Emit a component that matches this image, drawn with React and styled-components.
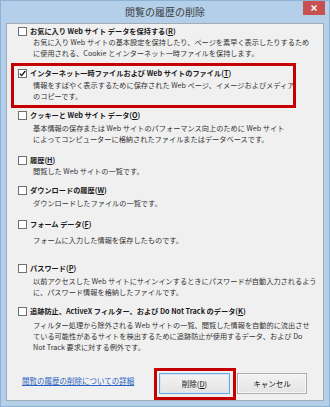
import React from 'react';
import styled, { createGlobalStyle } from 'styled-components';

const GlobalStyle = createGlobalStyle`
  html, body {
    margin: 0;
    padding: 0;
    background: #fff;
  }
  body {
    font-family: "Noto Sans CJK JP", "Liberation Sans", sans-serif;
  }
`;

const Window = styled.div`
  width: 330px;
  height: 407px;
  box-sizing: border-box;
  background: #b3cfea;
  border: 1px solid #8fb1d4;
  display: flex;
  flex-direction: column;
`;

const TitleBar = styled.div`
  height: 22px;
  display: grid;
  grid-template-columns: 1fr auto 1fr;
  align-items: start;
`;

const Title = styled.div`
  grid-column: 2;
  font-size: 10px;
  line-height: 22px;
  color: #3c3c3c;
`;

const CloseButton = styled.div`
  grid-column: 3;
  justify-self: end;
  margin-right: 4px;
  width: 22px;
  height: 14px;
  background: #c75050;
  display: flex;
  align-items: center;
  justify-content: center;
`;

const Client = styled.div`
  flex: 1;
  margin: 0 5px 5px 5px;
  background: #f0f0f0;
  border: 1px solid #a3abb5;
  padding: 1px 16px 0 11px;
  display: flex;
  flex-direction: column;
`;

const Item = styled.div`
  position: relative;
  margin-top: ${(p) => p.$top}px;

  ${(p) =>
    p.$highlight &&
    `
    &::after {
      content: '';
      position: absolute;
      left: -7px;
      top: -4px;
      width: 285px;
      height: 45px;
      box-sizing: border-box;
      border: 3px solid #c40000;
      pointer-events: none;
    }
  `}
`;

const Label = styled.label`
  display: flex;
  align-items: center;
  gap: 3px;
  height: 12px;
  font-size: 7.2px;
  font-weight: 700;
  color: #1a1a1a;
  white-space: nowrap;
`;

const Box = styled.span`
  width: 9px;
  height: 9px;
  box-sizing: border-box;
  border: 1px solid #6f6f6f;
  background: #fff;
  display: flex;
  align-items: center;
  justify-content: center;
  flex: none;
`;

const Desc = styled.div`
  margin: ${(p) => p.$gap}px 0 0 15px;
  font-size: 7.2px;
  line-height: 11px;
  color: #333;
  white-space: nowrap;
`;

const Footer = styled.div`
  margin-top: 20px;
  display: flex;
  align-items: flex-start;
  padding-left: 4px;
`;

const HelpLink = styled.a`
  margin-top: 2px;
  font-size: 7.5px;
  line-height: 12px;
  color: #2a62c0;
  text-decoration: underline;
  white-space: nowrap;
`;

const Buttons = styled.div`
  margin-left: auto;
  display: flex;
  gap: 7px;
`;

const Button = styled.button`
  position: relative;
  width: ${(p) => p.$w}px;
  height: 21px;
  padding: 0;
  font-family: inherit;
  font-size: 7.5px;
  color: #111;
  background: linear-gradient(#f3f3f3, #e4e4e4);
  border: 1px solid ${(p) => (p.$primary ? '#6ea6dc' : '#adadad')};
  box-shadow: inset 0 0 0 1px ${(p) => (p.$primary ? '#d4e6f7' : '#f7f7f7')};

  ${(p) =>
    p.$highlight &&
    `
    &::after {
      content: '';
      position: absolute;
      left: -6px;
      top: -6px;
      width: 82px;
      height: 32px;
      box-sizing: border-box;
      border: 3px solid #c40000;
      pointer-events: none;
    }
  `}
`;

const Check = () => (
  <svg width="7" height="7" viewBox="0 0 7 7">
    <path d="M0.8 3.6 L2.7 5.6 L6.2 1" fill="none" stroke="#111" strokeWidth="1.3" />
  </svg>
);

const items = [
  {
    top: 0,
    gap: 0,
    label: ['お気に入り Web サイト データを保持する(', 'R', ')'],
    desc: [
      'お気に入り Web サイトの基本設定を保持したり、ページを素早く表示したりするため',
      'に使用される、Cookie とインターネット一時ファイルを保持します。',
    ],
  },
  {
    top: 8,
    gap: 1,
    checked: true,
    highlight: true,
    label: ['インターネット一時ファイルおよび Web サイトのファイル(', 'T', ')'],
    desc: [
      '情報をすばやく表示するために保存された Web ページ、イメージおよびメディア',
      'のコピーです。',
    ],
  },
  {
    top: 7,
    gap: 2,
    label: ['クッキーと Web サイト データ(', 'O', ')'],
    desc: [
      '基本情報の保存または Web サイトのパフォーマンス向上のために Web サイト',
      'によってコンピューターに格納されたファイルまたはデータベースです。',
    ],
  },
  {
    top: 9,
    gap: 0,
    label: ['履歴(', 'H', ')'],
    desc: ['閲覧した Web サイトの一覧です。'],
  },
  {
    top: 7,
    gap: 2,
    label: ['ダウンロードの履歴(', 'W', ')'],
    desc: ['ダウンロードしたファイルの一覧です。'],
  },
  {
    top: 9,
    gap: 5,
    label: ['フォーム データ(', 'F', ')'],
    desc: ['フォームに入力した情報を保存したものです。'],
  },
  {
    top: 16,
    gap: 2,
    label: ['パスワード(', 'P', ')'],
    desc: [
      '以前アクセスした Web サイトにサインインするときにパスワードが自動入力されるよう',
      'に、パスワード情報を格納したファイルです。',
    ],
  },
  {
    top: 7,
    gap: 3,
    label: ['追跡防止、ActiveX フィルター、および Do Not Track のデータ(', 'K', ')'],
    desc: [
      'フィルター処理から除外される Web サイトの一覧、閲覧した情報を自動的に流出させ',
      'ている可能性があるサイトを検出するために追跡防止が使用するデータ、および Do',
      'Not Track 要求に対する例外です。',
    ],
  },
];

export default function App() {
  return (
    <>
      <GlobalStyle />
      <Window>
        <TitleBar>
          <Title>閲覧の履歴の削除</Title>
          <CloseButton>
            <svg width="6" height="6" viewBox="0 0 6 6">
              <path d="M0.5 0.5 L5.5 5.5 M5.5 0.5 L0.5 5.5" stroke="#fff" strokeWidth="1.5" />
            </svg>
          </CloseButton>
        </TitleBar>
        <Client>
          {items.map((it, i) => (
            <Item key={i} $top={it.top} $highlight={it.highlight}>
              <Label>
                <Box>{it.checked && <Check />}</Box>
                <span>
                  {it.label[0]}
                  <u>{it.label[1]}</u>
                  {it.label[2]}
                </span>
              </Label>
              <Desc $gap={it.gap}>
                {it.desc.map((line, j) => (
                  <div key={j}>{line}</div>
                ))}
              </Desc>
            </Item>
          ))}
          <Footer>
            <HelpLink href="#">閲覧の履歴の削除についての詳細</HelpLink>
            <Buttons>
              <Button $w={71} $primary $highlight>
                削除(<u>D</u>)
              </Button>
              <Button $w={70}>キャンセル</Button>
            </Buttons>
          </Footer>
        </Client>
      </Window>
    </>
  );
}
